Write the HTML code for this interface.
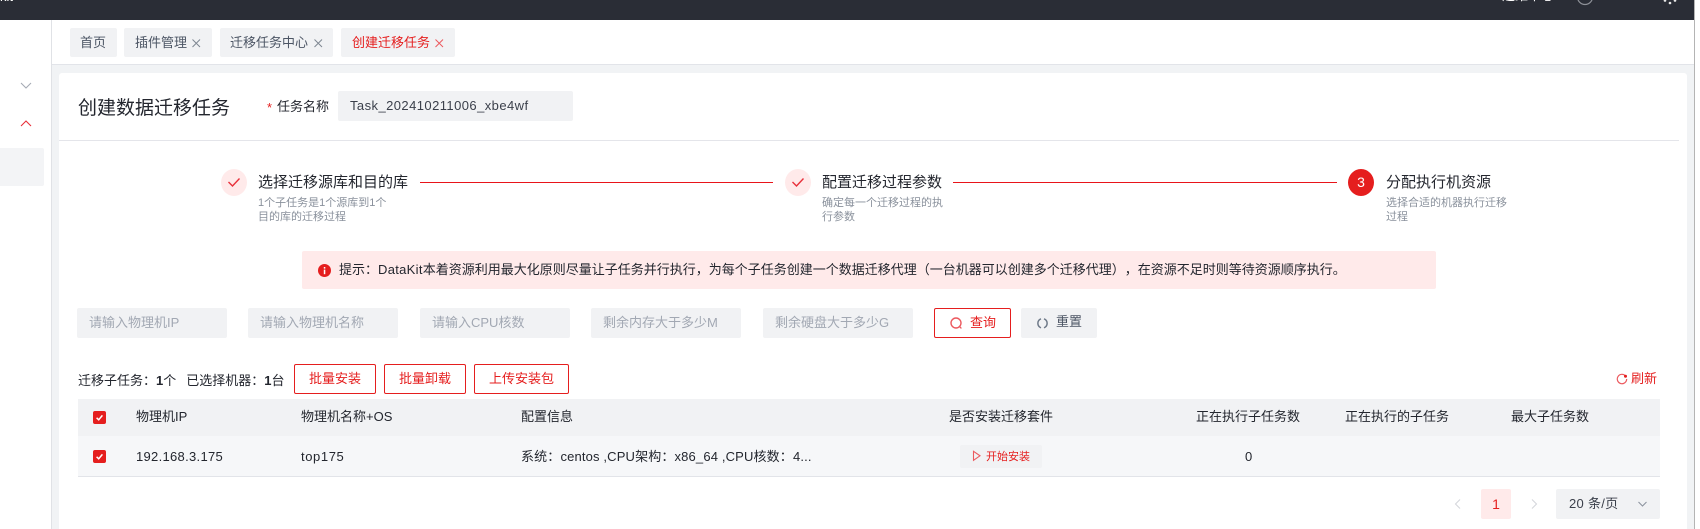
<!DOCTYPE html>
<html lang="zh"><head><meta charset="utf-8"><title>创建数据迁移任务</title>
<style>
html,body{margin:0;padding:0;width:1700px;height:529px;overflow:hidden;background:#fff}
body{position:relative;font-family:"Liberation Sans","Noto Sans CJK SC",sans-serif;font-size:13px;color:#23262e;text-spacing-trim:space-all}
.a,.t{position:absolute;white-space:nowrap}
.t{line-height:20px}
.b{position:absolute;box-sizing:border-box;text-align:center;border-radius:2px;white-space:nowrap}
.tab{background:#f1f2f4;top:28px;height:29px;line-height:29px;color:#4c5564;border-radius:2px;box-sizing:border-box;padding-left:10px;font-size:13px}
.tab svg{position:absolute;top:11px}
.inp{position:absolute;top:308px;height:30px;width:150px;background:#f1f2f4;border-radius:2px;color:#a2a8b3;line-height:30px;padding-left:12px;box-sizing:border-box;font-size:13px;white-space:nowrap}
.btn{top:364px;height:30px;line-height:28px;border:1px solid #e51e1e;color:#e51e1e;background:#fff;font-size:13px}
.st{font-size:15px;line-height:20px;color:#23262e;top:173px}
.ds{font-size:11px;line-height:13.5px;color:#8a919c;top:197px;white-space:nowrap}
.c{position:absolute;top:169px;width:26px;height:27px;border-radius:50%;background:#ffeaea}
.ln{position:absolute;top:182px;height:1px;background:#e8141a}
.h{top:407px}
.r{top:447px}
.cb{position:absolute;left:93px;width:13px;height:13px;background:#e51e1e;border-radius:2px}
</style></head><body>
<div class="a" style="left:0;top:0;width:1694px;height:20px;background:#2a2d36"></div>
<div class="a" style="left:0;top:-12px;color:#fff;font-size:13px;line-height:18px">kit</div>
<div class="a" style="left:1502px;top:-13px;color:#fff;font-size:13px;line-height:18px">运维中心</div>
<svg class="a" style="left:1574px;top:0" width="22" height="8"><circle cx="11" cy="-3" r="7.5" fill="none" stroke="#8d9097" stroke-width="1.2"/></svg>
<svg class="a" style="left:1660px;top:0" width="20" height="6"><circle cx="5" cy="0.5" r="1.3" fill="#e8e8e8"/><circle cx="10" cy="3" r="1.3" fill="#e8e8e8"/><circle cx="15" cy="0.5" r="1.3" fill="#e8e8e8"/></svg>

<div class="a" style="left:1694px;top:0;width:1px;height:529px;background:#b4b4b4"></div>
<div class="a" style="left:52px;top:64px;width:1642px;height:465px;background:#f1f3f5"></div>
<div class="a" style="left:51px;top:20px;width:1px;height:509px;background:#e0e2e6"></div>
<div class="a" style="left:52px;top:64px;width:1642px;height:1px;background:#e2e4e9"></div>

<svg class="a" style="left:20px;top:81px" width="12" height="10"><path d="M1 2L6 7L11 2" fill="none" stroke="#a6abb5" stroke-width="1.1"/></svg>
<svg class="a" style="left:20px;top:119px" width="12" height="10"><path d="M1 7L6 2L11 7" fill="none" stroke="#e8303a" stroke-width="1.1"/></svg>
<div class="a" style="left:0;top:148px;width:44px;height:38px;background:#f3f4f6;border-radius:0 2px 2px 0"></div>

<div class="a tab" style="left:70px;width:47px;padding-left:10px">首页</div>
<div class="a tab" style="left:124px;width:88px;padding-left:11px">插件管理<svg style="left:68px" width="9" height="9"><path d="M.5 .5L8 8M8 .5L.5 8" stroke="#7f8792" stroke-width="1" fill="none"/></svg></div>
<div class="a tab" style="left:220px;width:113px;padding-left:10px">迁移任务中心<svg style="left:94px" width="9" height="9"><path d="M.5 .5L8 8M8 .5L.5 8" stroke="#7f8792" stroke-width="1" fill="none"/></svg></div>
<div class="a tab" style="left:341px;width:114px;padding-left:11px;color:#e51e1e">创建迁移任务<svg style="left:94px" width="9" height="9"><path d="M.5 .5L8 8M8 .5L.5 8" stroke="#ec5a5f" stroke-width="1" fill="none"/></svg></div>

<div class="a" style="left:59px;top:73px;width:1628px;height:456px;background:#fff;border-radius:3px 3px 0 0"></div>
<div class="a" style="left:59px;top:140px;width:1620px;height:1px;background:#e4e5ea"></div>

<div class="t" style="left:78px;top:97px;font-size:19px;line-height:24px;color:#23262e">创建数据迁移任务</div>
<div class="t" style="left:267px;top:98px;color:#e51e1e">*</div>
<div class="t" style="left:277px;top:97px;color:#23262e">任务名称</div>
<div class="a" style="left:338px;top:91px;width:235px;height:30px;background:#f1f2f4;border-radius:2px;line-height:30px;padding-left:12px;box-sizing:border-box;color:#3a3f4a;font-size:13px;letter-spacing:.43px">Task_202410211006_xbe4wf</div>

<div class="c" style="left:221px"></div>
<svg class="a" style="left:227px;top:175px" width="14" height="14"><path d="M1.5 7L5.5 11L12.5 3.5" fill="none" stroke="#e8303a" stroke-width="1.4"/></svg>
<div class="t st" style="left:258px">选择迁移源库和目的库</div>
<div class="t ds" style="left:258px">1个子任务是1个源库到1个<br>目的库的迁移过程</div>
<div class="ln" style="left:420px;width:353px"></div>

<div class="c" style="left:785px"></div>
<svg class="a" style="left:791px;top:175px" width="14" height="14"><path d="M1.5 7L5.5 11L12.5 3.5" fill="none" stroke="#e8303a" stroke-width="1.4"/></svg>
<div class="t st" style="left:822px">配置迁移过程参数</div>
<div class="t ds" style="left:822px">确定每一个迁移过程的执<br>行参数</div>
<div class="ln" style="left:953px;width:384px"></div>

<div class="c" style="left:1348px;background:#e51e1e;color:#fff;text-align:center;line-height:27px;font-size:14px">3</div>
<div class="t st" style="left:1386px">分配执行机资源</div>
<div class="t ds" style="left:1386px">选择合适的机器执行迁移<br>过程</div>

<div class="a" style="left:302px;top:251px;width:1134px;height:38px;background:#ffeaea;border-radius:2px"></div>
<svg class="a" style="left:318px;top:264px" width="13" height="13"><circle cx="6.5" cy="6.5" r="6.5" fill="#e51e1e"/><rect x="5.8" y="5.6" width="1.5" height="4.6" fill="#fff"/><rect x="5.8" y="3" width="1.5" height="1.6" fill="#fff"/></svg>
<div class="t" style="left:339px;top:260px;color:#23262e;font-size:13px">提示：<span style="letter-spacing:.3px">DataKit</span>本着资源利用最大化原则尽量让子任务并行执行，为每个子任务创建一个数据迁移代理（一台机器可以创建多个迁移代理），在资源不足时则等待资源顺序执行。</div>

<div class="inp" style="left:77px">请输入物理机IP</div>
<div class="inp" style="left:248px">请输入物理机名称</div>
<div class="inp" style="left:420px">请输入CPU核数</div>
<div class="inp" style="left:591px">剩余内存大于多少M</div>
<div class="inp" style="left:763px">剩余硬盘大于多少G</div>

<div class="b" style="left:934px;top:308px;width:77px;height:30px;border:1px solid #e51e1e;background:#fff;color:#e51e1e;line-height:27px;padding-left:35px;text-align:left">查询</div>
<svg class="a" style="left:949px;top:316px" width="14" height="14"><circle cx="7" cy="7" r="5" fill="none" stroke="#ec5a5f" stroke-width="1.4"/><path d="M10.6 10.6L12.4 12.4" stroke="#ec5a5f" stroke-width="1.3"/></svg>
<div class="b" style="left:1021px;top:308px;width:76px;height:30px;background:#f1f2f4;color:#4c5564;line-height:28px;padding-left:35px;text-align:left">重置</div>
<svg class="a" style="left:1036px;top:317px" width="13" height="13"><path d="M5 1.8A4.8 4.8 0 0 0 5 10.8M8 1.8A4.8 4.8 0 0 1 8 10.8" fill="none" stroke="#6f7a89" stroke-width="1.5"/></svg>

<div class="t" style="left:78px;top:371px;color:#23262e">迁移子任务：<b>1</b>个<span style="margin-left:10px">已选择机器：</span><b>1</b>台</div>
<div class="b btn" style="left:294px;width:82px">批量安装</div>
<div class="b btn" style="left:384px;width:82px">批量卸载</div>
<div class="b btn" style="left:474px;width:95px">上传安装包</div>
<svg class="a" style="left:1616px;top:373px" width="12" height="12"><path d="M9.6 3A4.7 4.7 0 1 0 10.7 6" fill="none" stroke="#ec5a5f" stroke-width="1.2"/><circle cx="9.5" cy="3.2" r="1.5" fill="#e51e1e"/></svg>
<div class="t" style="left:1631px;top:369px;color:#e51e1e">刷新</div>

<div class="a" style="left:78px;top:399px;width:1582px;height:37px;background:#f1f2f4"></div>
<div class="a" style="left:78px;top:436px;width:1582px;height:41px;background:#f6f7f9;border-bottom:1px solid #e2e4e9;box-sizing:border-box"></div>
<div class="cb" style="top:411px"></div>
<svg class="a" style="left:93px;top:411px" width="13" height="13"><path d="M3.6 6.8L5.7 8.8L9.4 4.4" fill="none" stroke="#fff" stroke-width="1.5"/></svg>
<div class="cb" style="top:450px"></div>
<svg class="a" style="left:93px;top:450px" width="13" height="13"><path d="M3.6 6.8L5.7 8.8L9.4 4.4" fill="none" stroke="#fff" stroke-width="1.5"/></svg>

<div class="t h" style="left:136px">物理机IP</div>
<div class="t h" style="left:301px">物理机名称+OS</div>
<div class="t h" style="left:521px">配置信息</div>
<div class="t h" style="left:949px">是否安装迁移套件</div>
<div class="t h" style="left:1196px">正在执行子任务数</div>
<div class="t h" style="left:1345px">正在执行的子任务</div>
<div class="t h" style="left:1511px">最大子任务数</div>

<div class="t r" style="left:136px;letter-spacing:.3px">192.168.3.175</div>
<div class="t r" style="left:301px;letter-spacing:.6px">top175</div>
<div class="t r" style="left:521px;letter-spacing:.15px">系统：centos ,CPU架构：x86_64 ,CPU核数：4...</div>
<div class="b" style="left:960px;top:445px;width:82px;height:23px;background:#f1f2f4"></div>
<svg class="a" style="left:972px;top:450px" width="10" height="12"><path d="M1.5 1.3L8 5.8L1.5 10.3Z" fill="none" stroke="#ec5a5f" stroke-width="1.1"/></svg>
<div class="t" style="left:986px;top:447px;color:#e51e1e;font-size:11px">开始安装</div>
<div class="t r" style="left:1245px">0</div>

<svg class="a" style="left:1453px;top:498px" width="10" height="12"><path d="M7 1.5L2.5 6L7 10.5" fill="none" stroke="#d5d7dc" stroke-width="1.1"/></svg>
<div class="b" style="left:1481px;top:489px;width:30px;height:30px;background:#ffeaea;color:#e51e1e;line-height:30px;font-size:14px">1</div>
<svg class="a" style="left:1529px;top:498px" width="10" height="12"><path d="M3 1.5L7.5 6L3 10.5" fill="none" stroke="#d5d7dc" stroke-width="1.1"/></svg>
<div class="b" style="left:1556px;top:489px;width:104px;height:30px;background:#f1f2f4;color:#3a3f4a;line-height:29px;text-align:left;padding-left:13px;font-size:13px;letter-spacing:.3px">20 条/页</div>
<svg class="a" style="left:1637px;top:500px" width="11" height="9"><path d="M1.5 2L5.5 6L9.5 2" fill="none" stroke="#8a919c" stroke-width="1"/></svg>
</body></html>
